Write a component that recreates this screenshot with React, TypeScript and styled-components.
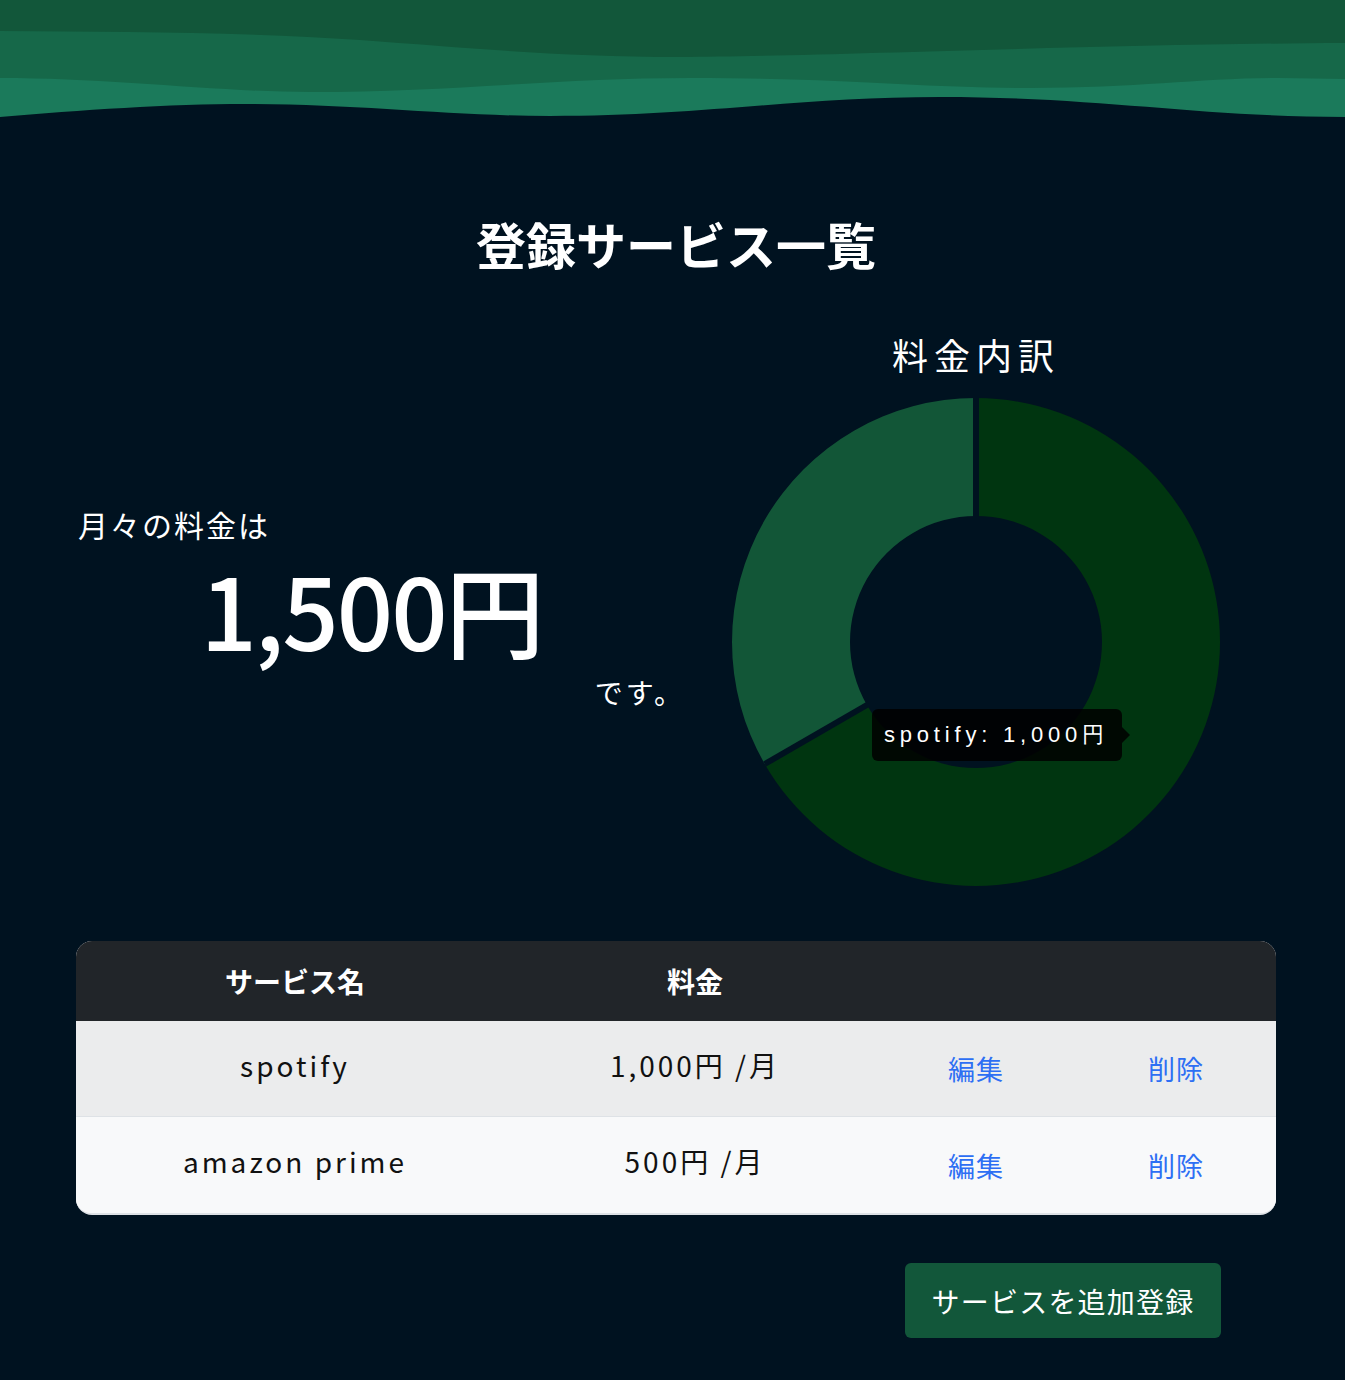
import React from "react";
import styled, { createGlobalStyle } from "styled-components";

const GlobalStyle = createGlobalStyle`
  html, body {
    margin: 0;
    padding: 0;
    background: #001220;
  }
  body {
    font-family: "Noto Sans CJK JP", "Noto Sans", sans-serif;
    color: #ffffff;
  }
`;

const Page = styled.div`
  min-height: 1380px;
  background: #001220;
`;

const WaveSvg = styled.svg`
  display: block;
  width: 100%;
  height: 117px;
`;

const Container = styled.main`
  width: 1200px;
  margin: 0 0 0 76px;
`;

const Title = styled.h1`
  margin: 96px 0 0;
  text-align: center;
  font-size: 50px;
  line-height: 60px;
  font-weight: 700;
`;

const Summary = styled.section`
  display: grid;
  grid-template-columns: 600px 600px;
  margin-top: 57px;
`;

const TotalBox = styled.div`
  display: flex;
  flex-direction: column;
  padding-top: 170px;
`;

const Lead = styled.p`
  margin: 0 0 0 2px;
  font-size: 30px;
  line-height: 48px;
  letter-spacing: 2px;
`;

const Amount = styled.p`
  margin: 0;
  padding-right: 9px;
  text-align: center;
  font-size: 99px;
  line-height: 120px;
  font-weight: 500;
  letter-spacing: -2px;
`;

const Suffix = styled.p`
  margin: 0 -9px 0 0;
  text-align: right;
  font-size: 28px;
  line-height: 48px;
  letter-spacing: 3px;
`;

const ChartBox = styled.div`
  display: flex;
  flex-direction: column;
  align-items: center;
`;

const ChartTitle = styled.h2`
  margin: 0;
  font-size: 36px;
  line-height: 48px;
  font-weight: 400;
  letter-spacing: 6px;
`;

const ChartWrap = styled.div`
  position: relative;
  width: 488px;
  height: 488px;
  margin-top: 20px;
`;

const Tooltip = styled.div`
  position: absolute;
  left: 140px;
  top: 311px;
  width: 250px;
  height: 52px;
  box-sizing: border-box;
  padding-left: 12px;
  display: flex;
  align-items: center;
  background: rgba(0, 0, 0, 0.85);
  border-radius: 6px;
  font-family: "Liberation Sans", Arial, sans-serif;
  font-size: 22px;
  letter-spacing: 4.8px;
  color: #ffffff;
  white-space: nowrap;
  &::after {
    content: "";
    position: absolute;
    right: -8px;
    top: 18px;
    border-top: 8px solid transparent;
    border-bottom: 8px solid transparent;
    border-left: 8px solid rgba(0, 0, 0, 0.85);
  }
`;

const Table = styled.div`
  margin-top: 55px;
  border-radius: 16px;
  overflow: hidden;
  background: #f8f9fa;
  border-bottom: 2px solid #dee2e6;
`;

const Row = styled.div<{ $variant: "head" | "odd" | "even" }>`
  display: grid;
  grid-template-columns: 438px 362px 200px 200px;
  align-items: center;
  height: ${(p) => (p.$variant === "head" ? "80px" : "96px")};
  background: ${(p) =>
    p.$variant === "head" ? "#212529" : p.$variant === "odd" ? "#ebeced" : "#f8f9fa"};
  border-bottom: ${(p) => (p.$variant === "odd" ? "1px solid #dee2e6" : "none")};
  box-sizing: border-box;
`;

const HeadCell = styled.div`
  text-align: center;
  font-size: 28px;
  font-weight: 700;
  color: #ffffff;
`;

const Cell = styled.div`
  text-align: center;
  font-size: 28px;
  letter-spacing: 3px;
  color: #111111;
  padding-bottom: 8px;
`;

const LinkCell = styled.a`
  text-align: center;
  font-size: 27px;
  color: #2d6ff4;
  text-decoration: none;
  letter-spacing: 1px;
`;

const Actions = styled.div`
  display: flex;
  justify-content: flex-end;
  padding: 48px 55px 0 0;
`;

const AddButton = styled.button`
  width: 316px;
  height: 75px;
  border: none;
  border-radius: 6px;
  background: #12573a;
  color: #ffffff;
  font-family: "Noto Sans CJK JP", sans-serif;
  font-size: 28px;
  letter-spacing: 1.2px;
  cursor: pointer;
`;

const Waves = () => (
  <WaveSvg viewBox="0 0 1345 117" preserveAspectRatio="none">
    <rect x="0" y="0" width="1345" height="117" fill="#12573a" />
    <path
      d="M0 31 C 120 32, 250 32, 360 40 S 560 57, 680 57 S 1100 44, 1345 43 L1345 117 L0 117 Z"
      fill="#166849"
    />
    <path
      d="M0 78 C 110 78, 220 92, 310 92 C 450 92, 560 78, 690 78 C 850 78, 920 88, 1030 88 C 1140 88, 1200 78, 1280 78 L1345 79 L1345 117 L0 117 Z"
      fill="#1b7a5b"
    />
    <path
      d="M0 117 C 80 110, 170 104, 245 104 C 360 104, 450 116, 550 116 C 700 116, 800 97, 940 97 C 1100 97, 1200 117, 1345 117 L1345 117 L0 117 Z"
      fill="#001220"
    />
  </WaveSvg>
);

const Donut = () => {
  const c = 244;
  const R = 244;
  const r = 126;
  const pt = (rad: number, deg: number) => {
    const a = (deg * Math.PI) / 180;
    return `${(c + rad * Math.cos(a)).toFixed(2)} ${(c + rad * Math.sin(a)).toFixed(2)}`;
  };
  const sector = (from: number, to: number) => {
    const large = to - from > 180 ? 1 : 0;
    return `M ${pt(R, from)} A ${R} ${R} 0 ${large} 1 ${pt(R, to)} L ${pt(r, to)} A ${r} ${r} 0 ${large} 0 ${pt(r, from)} Z`;
  };
  const a = (150 * Math.PI) / 180;
  return (
    <svg width="488" height="488" viewBox="0 0 488 488">
      <path d={sector(-90, 150)} fill="#003510" />
      <path d={sector(150, 270)} fill="#125637" />
      <line x1={c} y1={0} x2={c} y2={c - r + 2} stroke="#001220" strokeWidth="6" />
      <line
        x1={c + R * Math.cos(a)}
        y1={c + R * Math.sin(a)}
        x2={c + (r - 2) * Math.cos(a)}
        y2={c + (r - 2) * Math.sin(a)}
        stroke="#001220"
        strokeWidth="6"
      />
    </svg>
  );
};

const services = [
  { name: "spotify", price: "1,000円 /月" },
  { name: "amazon prime", price: "500円 /月" },
];

export default function App() {
  return (
    <Page>
      <GlobalStyle />
      <Waves />
      <Container>
        <Title>登録サービス一覧</Title>
        <Summary>
          <TotalBox>
            <Lead>月々の料金は</Lead>
            <Amount>1,500円</Amount>
            <Suffix>です。</Suffix>
          </TotalBox>
          <ChartBox>
            <ChartTitle>料金内訳</ChartTitle>
            <ChartWrap>
              <Donut />
              <Tooltip>spotify: 1,000円</Tooltip>
            </ChartWrap>
          </ChartBox>
        </Summary>
        <Table>
          <Row $variant="head">
            <HeadCell>サービス名</HeadCell>
            <HeadCell>料金</HeadCell>
            <HeadCell />
            <HeadCell />
          </Row>
          {services.map((s, i) => (
            <Row key={s.name} $variant={i % 2 === 0 ? "odd" : "even"}>
              <Cell>{s.name}</Cell>
              <Cell>{s.price}</Cell>
              <LinkCell href="#">編集</LinkCell>
              <LinkCell href="#">削除</LinkCell>
            </Row>
          ))}
        </Table>
        <Actions>
          <AddButton>サービスを追加登録</AddButton>
        </Actions>
      </Container>
    </Page>
  );
}
